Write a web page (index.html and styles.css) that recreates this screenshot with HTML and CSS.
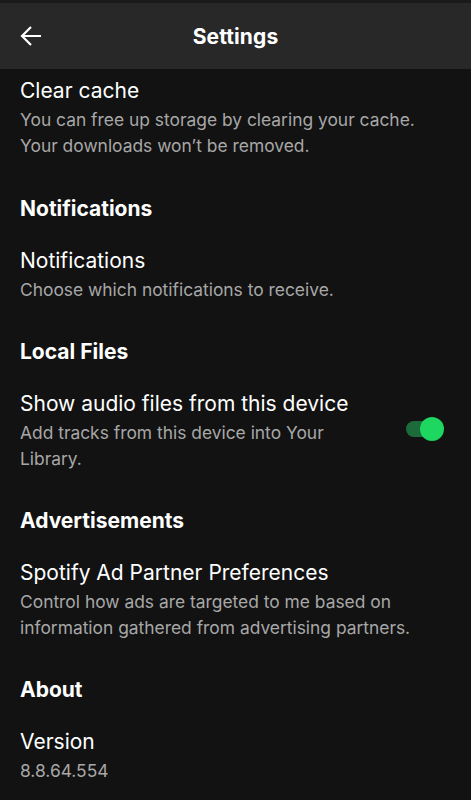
FILE: index.html
```html
<!DOCTYPE html>
<html>
<head>
<meta charset="utf-8">
<link rel="stylesheet" href="styles.css">
</head>
<body>
<div class="statusbar"></div>
<header class="topbar">
  <svg class="back" width="24" height="24" viewBox="0 0 24 24"><path d="M22 12H3M12 3L3 12l9 9" fill="none" stroke="#fff" stroke-width="2.2" stroke-linecap="butt" stroke-linejoin="miter"/></svg>
  <h1 class="title">Settings</h1>
</header>
<main class="content">
  <section class="section first">
    <div class="item">
      <div class="item-text">
        <div class="item-title">Clear cache</div>
        <div class="item-sub">You can free up storage by clearing your cache. Your downloads won’t be removed.</div>
      </div>
    </div>
  </section>
  <section class="section">
    <h2 class="section-title">Notifications</h2>
    <div class="item">
      <div class="item-text">
        <div class="item-title">Notifications</div>
        <div class="item-sub">Choose which notifications to receive.</div>
      </div>
    </div>
  </section>
  <section class="section">
    <h2 class="section-title">Local Files</h2>
    <div class="item">
      <div class="item-text narrow">
        <div class="item-title">Show audio files from this device</div>
        <div class="item-sub">Add tracks from this device into Your Library.</div>
      </div>
      <div class="toggle"><span class="track"></span><span class="knob"></span></div>
    </div>
  </section>
  <section class="section">
    <h2 class="section-title">Advertisements</h2>
    <div class="item">
      <div class="item-text">
        <div class="item-title">Spotify Ad Partner Preferences</div>
        <div class="item-sub">Control how ads are targeted to me based on information gathered from advertising partners.</div>
      </div>
    </div>
  </section>
  <section class="section">
    <h2 class="section-title">About</h2>
    <div class="item">
      <div class="item-text">
        <div class="item-title">Version</div>
        <div class="item-sub">8.8.64.554</div>
      </div>
    </div>
  </section>
</main>
</body>
</html>
```
FILE: styles.css
```css
* { box-sizing: border-box; }
html, body { margin: 0; padding: 0; }
body {
  background: #121212;
  color: #fff;
  font-family: Inter, "Noto Sans", sans-serif;
  width: 471px;
  height: 800px;
  overflow: hidden;
}
.statusbar { height: 3px; background: #1a1a1a; }
.topbar {
  height: 66px;
  background: #282828;
  display: flex;
  align-items: center;
  justify-content: center;
  position: relative;
}
.back { position: absolute; left: 19px; top: 21px; }
.title {
  margin: 0;
  font-size: 21px;
  font-weight: 700;
  letter-spacing: 0.1px;
}
.content { padding: 8px 20px 0 20px; }
.section { margin-bottom: 35px; }
.section.first { margin-bottom: 36px; }
.section-title {
  margin: 0 0 24px 0;
  font-size: 21px;
  font-weight: 700;
  line-height: 28px;
}
.item { display: flex; align-items: center; justify-content: space-between; }
.item-text { flex: 1; }
.item-text.narrow { max-width: 340px; }
.item-title { font-size: 21px; line-height: 28px; color: #fff; }
.item-sub { margin-top: 2px; font-size: 17.4px; line-height: 26px; color: #a7a7a7; }
.toggle { position: relative; width: 38px; height: 24px; margin-right: 7px; margin-top: -4px; }
.track { position: absolute; left: 0; top: 4px; width: 30px; height: 16px; border-radius: 8px; background: #1c6b3a; }
.knob { position: absolute; right: 0; top: 0; width: 24px; height: 24px; border-radius: 50%; background: #1ed760; }
```
